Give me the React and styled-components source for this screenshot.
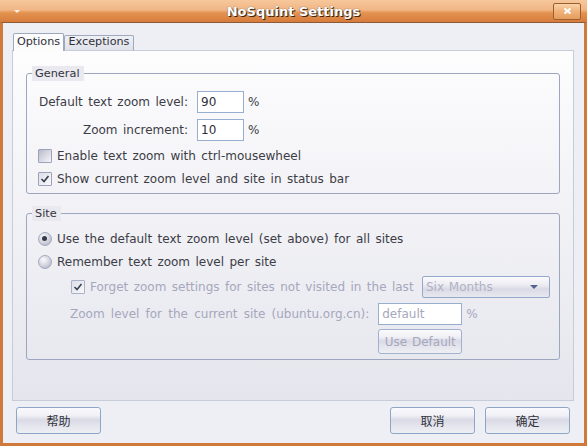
import React from 'react';
import styled, { createGlobalStyle } from 'styled-components';

const GlobalStyle = createGlobalStyle`
  * { box-sizing: border-box; }
  html, body { margin: 0; padding: 0; background: #eeeff4; }
  body {
    font-family: "DejaVu Sans", "Noto Sans CJK SC", sans-serif;
    font-size: 12px;
    color: #3c3c46;
  }
`;

const Window = styled.div`
  width: 587px;
  height: 446px;
  display: flex;
  flex-direction: column;
  overflow: hidden;
`;

const TitleBar = styled.div`
  height: 22px;
  flex: none;
  display: grid;
  grid-template-columns: 1fr auto 1fr;
  align-items: center;
  background: linear-gradient(to bottom, #f6c79a 0%, #f1b686 45%, #e39350 58%, #d77c3c 100%);
`;

const MenuArrow = styled.span`
  justify-self: start;
  margin-left: 14px;
  margin-top: 1px;
  width: 0;
  height: 0;
  border-left: 3px solid transparent;
  border-right: 3px solid transparent;
  border-top: 3px solid #fbeee2;
`;

const Title = styled.div`
  font-weight: bold;
  font-size: 13px;
  color: #ffffff;
  text-shadow: 1px 1px 0 #3c2410, 0 0 1px #5a3418;
`;

const CloseButton = styled.button`
  justify-self: end;
  margin-right: 6px;
  width: 28px;
  height: 17px;
  padding: 0;
  border: 1px solid #9c5e2e;
  border-radius: 2px;
  background: linear-gradient(#f9d3a9, #efb27a 50%, #e59d5e);
  display: flex;
  align-items: center;
  justify-content: center;
`;

const Frame = styled.div`
  flex: 1;
  display: flex;
  flex-direction: column;
  border: 3px solid #cf7a3a;
  border-top: 1px solid #8c5a34;
  background: #eeeff4;
  padding: 10px 10px 0 9px;
`;

const TabStrip = styled.div`
  display: flex;
  align-items: flex-end;
  margin-left: 1px;
  margin-bottom: -1px;
  position: relative;
  z-index: 1;
`;

const Tab = styled.div`
  width: ${p => p.$w}px;
  height: ${p => (p.$active ? 18 : 16)}px;
  border: 1px solid #9ea9c0;
  border-bottom: ${p => (p.$active ? 'none' : '1px solid #c6ccda')};
  border-radius: 2px 2px 0 0;
  background: ${p => (p.$active ? '#fcfcfd' : 'linear-gradient(#eef0f4, #e0e2ea)')};
  font-size: 11.2px;
  line-height: ${p => (p.$active ? 13 : 12)}px;
  padding-top: ${p => (p.$active ? 1 : 0)}px;
  text-align: center;
  color: #30303a;
`;

const Panel = styled.div`
  height: 351px;
  flex: none;
  border: 1px solid #c6ccda;
  background: linear-gradient(#fdfdfe 0%, #f3f3f7 40%, #e5e6ed 100%);
  padding: 15px 13px 0;
  display: flex;
  flex-direction: column;
  gap: 12px;
  word-spacing: 1.6px;
`;

const Group = styled.fieldset`
  margin: 0;
  padding: 0;
  min-width: 0;
  border: 1px solid #9ca6be;
  border-radius: 3px;
`;

const Legend = styled.legend`
  margin-left: 5px;
  padding: 0 4px 0 3px;
  height: 15px;
  line-height: 15px;
  font-size: 11.3px;
  background: #e9e9ef;
  color: #34343e;
`;

const GroupBody = styled.div`
  padding: ${p => p.$pad};
  display: flex;
  flex-direction: column;
`;

const FieldGrid = styled.div`
  display: grid;
  grid-template-columns: 161px max-content;
  row-gap: 6px;
  align-items: center;
`;

const FieldLabel = styled.label`
  text-align: right;
  padding-right: 9px;
  white-space: nowrap;
  color: #3c3c46;
`;

const UnitWrap = styled.div`
  display: flex;
  align-items: center;
  gap: 4px;
`;

const TextInput = styled.input`
  width: ${p => p.$w}px;
  height: 22px;
  margin: 0;
  border: 1px solid #98aecf;
  background: #ffffff;
  padding: 0 3px;
  font: inherit;
  color: ${p => (p.disabled ? '#a6a7bc' : '#30303a')};
  outline: none;
`;

const Unit = styled.span`
  color: ${p => (p.$disabled ? '#a6a7bc' : '#3c3c46')};
`;

const ChecksList = styled.div`
  margin-top: 3px;
  display: flex;
  flex-direction: column;
`;

const OptionRow = styled.label`
  height: ${p => p.$h || 23}px;
  display: flex;
  align-items: center;
  gap: 5px;
  padding-left: ${p => p.$indent || 2}px;
  margin-top: ${p => p.$mt || 0}px;
  white-space: nowrap;
  color: ${p => (p.$disabled ? '#a6a7bc' : '#3c3c46')};
`;

const CheckBox = styled.span`
  flex: none;
  width: 14px;
  height: 14px;
  border: 1px solid ${p => (p.$disabled ? '#a9b1c6' : '#9aa3ba')};
  border-radius: 1px;
  background: ${p =>
    p.$checked
      ? 'linear-gradient(135deg, #dcdde8, #fafafc)'
      : 'linear-gradient(135deg, #b8bac9, #f6f6f9)'};
  display: flex;
  align-items: center;
  justify-content: center;
`;

const Radio = styled.span`
  flex: none;
  width: 14px;
  height: 14px;
  border-radius: 50%;
  border: 1px solid #a4a9bc;
  background: radial-gradient(circle at 38% 32%, #fbfbfd 0%, #d4d5e0 50%, #a9abbe 100%);
  display: flex;
  align-items: center;
  justify-content: center;
  &::after {
    content: '';
    display: ${p => (p.$checked ? 'block' : 'none')};
    width: 5px;
    height: 5px;
    border-radius: 50%;
    background: #343a4a;
    margin: 0 1px 1px 0;
  }
`;

const Select = styled.div`
  margin-left: auto;
  width: 128px;
  height: 22px;
  border: 1px solid #94a9ca;
  border-radius: 2px;
  background: linear-gradient(#fbfbfd, #ececf2 40%, #d9dae5 60%, #e7e8ef);
  display: flex;
  align-items: center;
  justify-content: space-between;
  padding: 0 11px 0 3px;
  color: #b0b1c6;
  word-spacing: 1px;
`;

const SelectArrow = styled.span`
  width: 0;
  height: 0;
  border-left: 4px solid transparent;
  border-right: 4px solid transparent;
  border-top: 4px solid #50648c;
`;

const ZoomGrid = styled.div`
  margin-top: 5px;
  padding-left: 34px;
  display: grid;
  grid-template-columns: max-content 84px max-content;
  column-gap: 4px;
  row-gap: 4px;
  align-items: center;
`;

const ZoomLabel = styled.span`
  padding-right: 5px;
  color: #a6a7bc;
  white-space: nowrap;
  word-spacing: 2.4px;
`;

const Button = styled.button`
  width: ${p => p.$w || 85}px;
  height: ${p => p.$h || 27}px;
  margin: 0;
  padding: 0;
  grid-column: ${p => p.$col || 'auto'};
  border: 1px solid ${p => (p.disabled ? '#a0b2ce' : '#8fa5c8')};
  border-radius: 3px;
  background: linear-gradient(#fafafd 0%, #f0f0f5 30%, #d9dae5 48%, #e6e7ee 75%, #eeeff4 100%);
  font: inherit;
  word-spacing: 1px;
  color: ${p => (p.disabled ? '#a6a7bc' : '#33333d')};
  cursor: default;
`;

const ButtonBar = styled.div`
  margin-top: 6px;
  padding: 0 4px;
  display: flex;
  gap: 10px;
`;

const Spacer = styled.div`
  flex: 1;
`;

const Tick = ({ color = '#363c4c' }) => (
  <svg width="10" height="10" viewBox="0 0 10 10">
    <path d="M1.5 5 L4 7.5 L8.5 2" fill="none" stroke={color} strokeWidth="1.6" />
  </svg>
);

export default function App() {
  return (
    <>
      <GlobalStyle />
      <Window>
        <TitleBar>
          <MenuArrow />
          <Title>NoSquint Settings</Title>
          <CloseButton aria-label="Close">
            <svg width="9" height="8" viewBox="0 0 9 8">
              <path d="M1.5 1.5 L7.5 6.5 M7.5 1.5 L1.5 6.5" stroke="#ffffff" strokeWidth="2.2" />
            </svg>
          </CloseButton>
        </TitleBar>
        <Frame>
          <TabStrip>
            <Tab $active $w={51}>Options</Tab>
            <Tab $w={70}>Exceptions</Tab>
          </TabStrip>
          <Panel>
            <Group>
              <Legend>General</Legend>
              <GroupBody $pad="10px 9px 3px">
                <FieldGrid>
                  <FieldLabel>Default text zoom level:</FieldLabel>
                  <UnitWrap>
                    <TextInput $w={47} defaultValue="90" />
                    <Unit>%</Unit>
                  </UnitWrap>
                  <FieldLabel>Zoom increment:</FieldLabel>
                  <UnitWrap>
                    <TextInput $w={47} defaultValue="10" />
                    <Unit>%</Unit>
                  </UnitWrap>
                </FieldGrid>
                <ChecksList>
                  <OptionRow>
                    <CheckBox />
                    Enable text zoom with ctrl-mousewheel
                  </OptionRow>
                  <OptionRow>
                    <CheckBox $checked>
                      <Tick />
                    </CheckBox>
                    Show current zoom level and site in status bar
                  </OptionRow>
                </ChecksList>
              </GroupBody>
            </Group>
            <Group>
              <Legend>Site</Legend>
              <GroupBody $pad="6px 9px 5px">
                <OptionRow>
                  <Radio $checked />
                  Use the default text zoom level (set above) for all sites
                </OptionRow>
                <OptionRow>
                  <Radio />
                  Remember text zoom level per site
                </OptionRow>
                <OptionRow $disabled $indent={35} $h={22} $mt={3}>
                  <CheckBox $checked $disabled>
                    <Tick color="#3c4252" />
                  </CheckBox>
                  Forget zoom settings for sites not visited in the last
                  <Select>
                    Six Months
                    <SelectArrow />
                  </Select>
                </OptionRow>
                <ZoomGrid>
                  <ZoomLabel>Zoom level for the current site (ubuntu.org.cn):</ZoomLabel>
                  <TextInput $w={84} defaultValue="default" disabled />
                  <Unit $disabled>%</Unit>
                  <Button $w={84} $h={25} $col={2} disabled>
                    Use Default
                  </Button>
                </ZoomGrid>
              </GroupBody>
            </Group>
          </Panel>
          <ButtonBar>
            <Button>帮助</Button>
            <Spacer />
            <Button>取消</Button>
            <Button>确定</Button>
          </ButtonBar>
        </Frame>
      </Window>
    </>
  );
}
